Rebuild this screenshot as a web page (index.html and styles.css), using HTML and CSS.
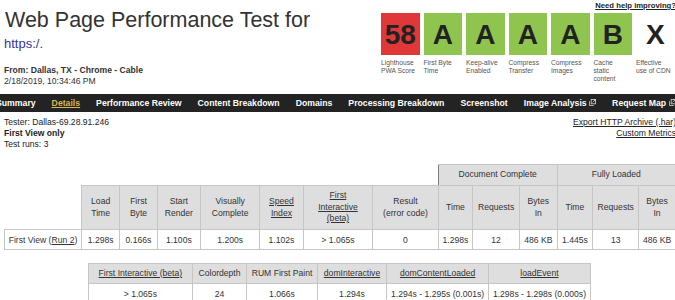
FILE: index.html
```html
<!DOCTYPE html>
<html lang="en">
<head>
  <meta charset="UTF-8">
  <meta name="viewport" content="width=device-width, initial-scale=1.0">
  <title>Web Page Performance Test - Details</title>
  <link rel="stylesheet" href="styles.css">
</head>
<body>
<div class="page">
  <header class="top">
    <div class="test-title">
      <h1>Web Page Performance Test for</h1>
      <a class="url" href="#">https:/.</a>
      <p class="from"><b>From: Dallas, TX - Chrome - Cable</b><br>2/18/2019, 10:34:46 PM</p>
    </div>
    <div class="grades-box">
      <a class="help" href="#">Need help improving?</a>
      <ul class="grades">
        <li><span class="grade red">58</span><span class="label">Lighthouse<br>PWA Score</span></li>
        <li><span class="grade green">A</span><span class="label">First Byte<br>Time</span></li>
        <li><span class="grade green">A</span><span class="label">Keep-alive<br>Enabled</span></li>
        <li><span class="grade green">A</span><span class="label">Compress<br>Transfer</span></li>
        <li><span class="grade green">A</span><span class="label">Compress<br>Images</span></li>
        <li><span class="grade green">B</span><span class="label">Cache<br>static<br>content</span></li>
        <li><span class="grade">X</span><span class="label">Effective<br>use of CDN</span></li>
      </ul>
    </div>
  </header>

  <nav class="tabs">
    <a href="#">Summary</a>
    <a href="#" class="current">Details</a>
    <a href="#">Performance Review</a>
    <a href="#">Content Breakdown</a>
    <a href="#">Domains</a>
    <a href="#">Processing Breakdown</a>
    <a href="#">Screenshot</a>
    <a href="#">Image Analysis <svg class="ext" viewBox="0 0 8 8"><rect x="2.5" y="0.5" width="5" height="5" fill="none" stroke="#ccc"/><path d="M0.5 2.5v5h5" fill="none" stroke="#ccc"/><path d="M4 4l3-3M5 1h2v2" fill="none" stroke="#ccc" stroke-width="0.8"/></svg></a>
    <a href="#">Request Map <svg class="ext" viewBox="0 0 8 8"><rect x="2.5" y="0.5" width="5" height="5" fill="none" stroke="#ccc"/><path d="M0.5 2.5v5h5" fill="none" stroke="#ccc"/><path d="M4 4l3-3M5 1h2v2" fill="none" stroke="#ccc" stroke-width="0.8"/></svg></a>
  </nav>

  <div class="info">
    <div>
      Tester: Dallas-69.28.91.246<br>
      <b>First View only</b><br>
      Test runs: 3
    </div>
    <div class="links">
      <a href="#">Export HTTP Archive (.har)</a><br>
      <a href="#">Custom Metrics</a>
    </div>
  </div>

  <table class="results">
    <colgroup>
      <col style="width:77px"><col style="width:38.3px"><col style="width:37.4px"><col style="width:43.3px">
      <col style="width:59.3px"><col style="width:43.4px"><col style="width:69.6px"><col style="width:65.4px">
      <col style="width:34.6px"><col style="width:46.7px"><col style="width:37.7px"><col style="width:35.6px">
      <col style="width:46px"><col style="width:36.7px">
    </colgroup>
    <tr class="group">
      <th class="blank" colspan="8"></th>
      <th colspan="3" class="split">Document Complete</th>
      <th colspan="3">Fully Loaded</th>
    </tr>
    <tr class="heads">
      <th class="blank"></th>
      <th>Load<br>Time</th>
      <th>First<br>Byte</th>
      <th>Start<br>Render</th>
      <th>Visually<br>Complete</th>
      <th><a href="#">Speed<br>Index</a></th>
      <th><a href="#">First<br>Interactive<br>(beta)</a></th>
      <th>Result<br>(error code)</th>
      <th>Time</th>
      <th>Requests</th>
      <th>Bytes<br>In</th>
      <th>Time</th>
      <th>Requests</th>
      <th>Bytes<br>In</th>
    </tr>
    <tr>
      <td>First View (<a href="#">Run 2</a>)</td>
      <td>1.298s</td>
      <td>0.166s</td>
      <td>1.100s</td>
      <td>1.200s</td>
      <td>1.102s</td>
      <td>&gt; 1.065s</td>
      <td>0</td>
      <td>1.298s</td>
      <td>12</td>
      <td>486 KB</td>
      <td>1.445s</td>
      <td>13</td>
      <td>486 KB</td>
    </tr>
  </table>

  <table class="extra">
    <colgroup>
      <col style="width:103.7px"><col style="width:54.7px"><col style="width:70.3px">
      <col style="width:69.7px"><col style="width:101.6px"><col style="width:102px">
    </colgroup>
    <tr>
      <th><a href="#">First Interactive (beta)</a></th>
      <th>Colordepth</th>
      <th>RUM First Paint</th>
      <th><a href="#">domInteractive</a></th>
      <th><a href="#">domContentLoaded</a></th>
      <th><a href="#">loadEvent</a></th>
    </tr>
    <tr>
      <td>&gt; 1.065s</td>
      <td>24</td>
      <td>1.066s</td>
      <td>1.294s</td>
      <td>1.294s - 1.295s (0.001s)</td>
      <td>1.298s - 1.298s (0.000s)</td>
    </tr>
  </table>
</div>
</body>
</html>
```

FILE: styles.css
```css
html {
  overflow: hidden;
}
body {
  margin: 0;
  font-family: "Liberation Sans", Arial, sans-serif;
  color: #333;
  background: #fff;
}
a {
  color: #222;
}
.page {
  width: 672px;
  margin-left: 4px;
}
.top {
  display: flex;
}
.test-title {
  flex: 1;
}
h1 {
  margin: 0;
  padding: 6.5px 0 0 1px;
  font-size: 21.5px;
  line-height: 26px;
  font-weight: normal;
  color: #333;
}
.url {
  display: block;
  margin-top: 3.5px;
  font-size: 13px;
  line-height: 16px;
  color: #35359a;
  text-decoration: none;
}
.from {
  margin: 13px 0 0;
  font-size: 8.6px;
  line-height: 10.5px;
  color: #333;
}
.grades-box {
  width: 295px;
}
.help {
  display: block;
  padding-top: 1px;
  text-align: right;
  font-size: 7.7px;
  line-height: 10px;
  font-weight: bold;
  color: #222;
  white-space: nowrap;
}
.grades {
  list-style: none;
  margin: 2px 0 0;
  padding: 0;
  display: flex;
  gap: 4px;
}
.grades li {
  width: 38.5px;
  display: flex;
  flex-direction: column;
}
.grade {
  height: 42px;
  line-height: 43px;
  text-align: center;
  font-size: 28px;
  font-weight: bold;
  color: #222;
}
.red {
  background: #e03838;
}
.green {
  background: #8fc54f;
}
.label {
  margin-top: 4.4px;
  font-size: 6.7px;
  line-height: 8px;
  color: #555;
  white-space: nowrap;
}
.tabs {
  display: flex;
  gap: 16px;
  margin: 8px -4px 0;
  height: 18px;
  line-height: 18px;
  background: #232323;
  font-size: 8.7px;
  font-weight: bold;
  white-space: nowrap;
  overflow: hidden;
}
.tabs a {
  color: #fff;
  text-decoration: none;
}
.tabs a:first-child {
  margin-left: -4px;
}
.tabs a.current {
  color: #d8b94f;
  text-decoration: underline;
}
.ext {
  width: 7px;
  height: 7px;
  vertical-align: 0;
}
.info {
  display: flex;
  justify-content: space-between;
  padding-top: 5px;
  font-size: 8.6px;
  line-height: 11px;
  color: #222;
}
.info .links {
  text-align: right;
  white-space: nowrap;
}
table {
  border-collapse: collapse;
  table-layout: fixed;
  font-size: 8.6px;
  color: #333;
}
th, td {
  border: 1px solid #c6c6c6;
  padding: 0 2px;
  text-align: center;
  white-space: nowrap;
  overflow: hidden;
}
th {
  background: #dedede;
  font-weight: normal;
  line-height: 11.5px;
}
th a {
  color: #333;
}
td {
  background: #fff;
}
td a {
  color: #333;
}
th.blank {
  background: #fff;
  border: none;
}
th.split {
  border-left: 1px solid #7a7a7a;
}
.results {
  width: 671px;
  margin-top: 14px;
}
.results .group th {
  height: 20px;
}
.results .heads th {
  height: 43px;
}
.results td {
  height: 19px;
}
.extra {
  width: 502px;
  margin: 13px 0 0 84px;
}
.extra th, .extra td {
  height: 19px;
}
```
